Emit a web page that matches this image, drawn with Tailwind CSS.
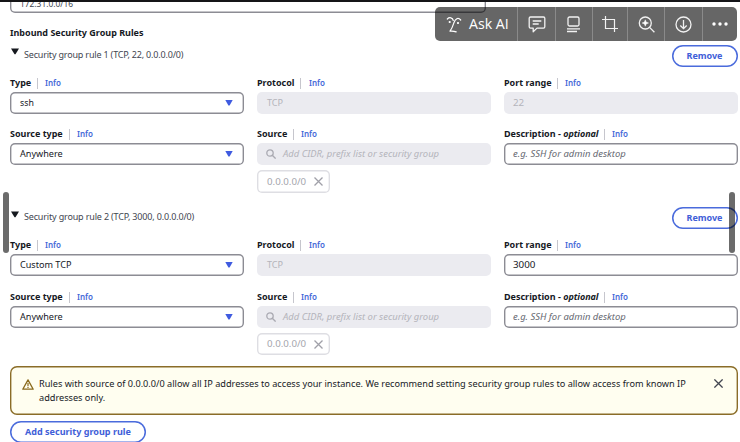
<!DOCTYPE html>
<html lang="en">
<head>
<meta charset="utf-8">
<title>Inbound Security Group Rules</title>
<script src="https://cdn.jsdelivr.net/npm/@tailwindcss/browser@4"></script>
</head>
<body class="relative h-[442px] w-[740px] overflow-hidden bg-white font-['Noto_Sans',sans-serif] text-[9.1px] leading-[14px] whitespace-nowrap text-[#16191f]">

<!-- Network field above the rules, cut by the top edge -->
<header class="h-[13px] overflow-hidden border-t-2 border-[#151518]">
  <div class="-mt-3 ml-[10px] flex h-[23px] w-[476px] items-center rounded-[5px] shadow-[inset_0_0_0_1.4px_#8c8c94] pl-[10px] text-[8.4px] text-[#424650]"><span class="mt-[5px]">172.31.0.0/16</span></div>
</header>

<main class="pl-[10px]">
  <h2 class="mt-[13px] h-[14px] text-[9px] font-bold">Inbound Security Group Rules</h2>

  <!-- Rule 1 -->
  <section class="mt-[5px] h-[162px] w-[727.5px]">
    <div class="flex h-[22px] justify-between">
      <div class="flex">
        <svg class="mt-[3px] ml-px h-[7px] w-2" viewBox="0 0 8 7"><path d="M0 .5h8L4.500 6.200h-1z" fill="#16191f"/></svg>
        <span class="mt-[3px] ml-[5px] text-[9px] tracking-[-0.18px] text-[#424650]">Security group rule 1 (TCP, 22, 0.0.0.0/0)</span>
      </div>
      <button class="h-[22px] w-[66px] rounded-full text-[9px] leading-[22px] font-bold text-[#3f60d8] shadow-[inset_0_0_0_1.5px_#4a6bdc]">Remove</button>
    </div>
    <div class="mt-[7px] grid grid-cols-[233.5px_233.5px_233.5px] gap-x-[13.500px]">
      <div>
        <div class="flex h-[18px] items-center text-[9px] font-bold"><span class="w-[27px]">Type</span><i class="h-[11px] w-px bg-[#c6c6cd]"></i><span class="ml-[7px] text-[8px] font-semibold text-[#4468d8]">Info</span></div>
        <div class="flex h-[22px] items-center justify-between rounded-[5px] pr-[11px] pl-[10px] shadow-[inset_0_0_0_1.4px_#8c8c94]"><span class="text-[8.8px]">ssh</span><svg class="h-[6px] w-[8px]" viewBox="0 0 8 6"><path d="M.3 0h7.400L4.600 5.600H3.400z" fill="#3f5be0"/></svg></div>
      </div>
      <div>
        <div class="flex h-[18px] items-center text-[9px] font-bold"><span class="w-[43px]">Protocol</span><i class="h-[11px] w-px bg-[#c6c6cd]"></i><span class="ml-[8px] text-[8px] font-semibold text-[#4468d8]">Info</span></div>
        <div class="flex h-[22px] items-center rounded-[5px] bg-[#ebebf0] pl-[10px] text-[#b4b4bb]">TCP</div>
      </div>
      <div>
        <div class="flex h-[18px] items-center text-[9px] font-bold"><span class="w-[53px]">Port range</span><i class="h-[11px] w-px bg-[#c6c6cd]"></i><span class="ml-[7px] text-[8px] font-semibold text-[#4468d8]">Info</span></div>
        <div class="flex h-[22px] items-center rounded-[5px] bg-[#ebebf0] pl-[9px] text-[9.8px] text-[#b4b4bb]">22</div>
      </div>
    </div>
    <div class="mt-[11px] grid grid-cols-[233.5px_233.5px_233.5px] gap-x-[13.500px]">
      <div>
        <div class="flex h-[18px] items-center text-[9px] font-bold"><span class="w-[59px]">Source type</span><i class="h-[11px] w-px bg-[#c6c6cd]"></i><span class="ml-[7px] text-[8px] font-semibold text-[#4468d8]">Info</span></div>
        <div class="flex h-[22px] items-center justify-between rounded-[5px] pr-[11px] pl-[10px] shadow-[inset_0_0_0_1.4px_#8c8c94]"><span>Anywhere</span><svg class="h-[6px] w-[8px]" viewBox="0 0 8 6"><path d="M.3 0h7.400L4.600 5.600H3.400z" fill="#3f5be0"/></svg></div>
      </div>
      <div>
        <div class="flex h-[18px] items-center text-[9px] font-bold"><span class="w-[36px]">Source</span><i class="h-[11px] w-px bg-[#c6c6cd]"></i><span class="ml-[7px] text-[8px] font-semibold text-[#4468d8]">Info</span></div>
        <div class="flex h-[22px] items-center rounded-[5px] bg-[#ebebf0] pl-[9px] text-[9.45px] text-[#b4b4bb] italic"><svg class="mr-[7px] size-[10px]" viewBox="0 0 10 10" fill="none" stroke="#aaaab2" stroke-width="1.300"><circle cx="4" cy="4" r="3.200"/><path d="M6.300 6.300 9.600 9.600"/></svg>Add CIDR, prefix list or security group</div>
        <div class="mt-[5px] flex h-[23px] w-[73px] items-center justify-between rounded-[5px] pr-[7px] pl-[10px] text-[9.7px] text-[#a5a5ad] shadow-[inset_0_0_0_1.4px_#dedee3]">0.0.0.0/0<svg class="size-[9px]" viewBox="0 0 9 9" stroke="#a0a0a8" stroke-width="1.300"><path d="m.5.5 8 8m0-8-8 8"/></svg></div>
      </div>
      <div>
        <div class="flex h-[18px] items-center text-[9px] font-bold"><span class="w-[100px]">Description - <em class="tracking-[-0.05px]">optional</em></span><i class="h-[11px] w-px bg-[#c6c6cd]"></i><span class="ml-[7px] text-[8px] font-semibold text-[#4468d8]">Info</span></div>
        <div class="flex h-[22px] items-center rounded-[5px] pl-[9px] text-[9.45px] text-[#656871] italic shadow-[inset_0_0_0_1.4px_#8c8c94]">e.g. SSH for admin desktop</div>
      </div>
    </div>
  </section>

  <!-- Rule 2 -->
  <section class="h-[148px] w-[727.5px]">
    <div class="flex h-[22px] justify-between">
      <div class="flex">
        <svg class="mt-[4px] ml-px h-[7px] w-2" viewBox="0 0 8 7"><path d="M0 .5h8L4.500 6.200h-1z" fill="#16191f"/></svg>
        <span class="mt-[3px] ml-[5px] text-[9px] tracking-[-0.16px] text-[#424650]">Security group rule 2 (TCP, 3000, 0.0.0.0/0)</span>
      </div>
      <button class="h-[22px] w-[66px] rounded-full text-[9px] leading-[22px] font-bold text-[#3f60d8] shadow-[inset_0_0_0_1.5px_#4a6bdc]">Remove</button>
    </div>
    <div class="mt-[7px] grid grid-cols-[233.5px_233.5px_233.5px] gap-x-[13.500px]">
      <div>
        <div class="flex h-[18px] items-center text-[9px] font-bold"><span class="w-[27px]">Type</span><i class="h-[11px] w-px bg-[#c6c6cd]"></i><span class="ml-[7px] text-[8px] font-semibold text-[#4468d8]">Info</span></div>
        <div class="flex h-[22px] items-center justify-between rounded-[5px] pr-[11px] pl-[10px] shadow-[inset_0_0_0_1.4px_#8c8c94]"><span>Custom TCP</span><svg class="h-[6px] w-[8px]" viewBox="0 0 8 6"><path d="M.3 0h7.400L4.600 5.600H3.400z" fill="#3f5be0"/></svg></div>
      </div>
      <div>
        <div class="flex h-[18px] items-center text-[9px] font-bold"><span class="w-[43px]">Protocol</span><i class="h-[11px] w-px bg-[#c6c6cd]"></i><span class="ml-[8px] text-[8px] font-semibold text-[#4468d8]">Info</span></div>
        <div class="flex h-[22px] items-center rounded-[5px] bg-[#ebebf0] pl-[10px] text-[#b4b4bb]">TCP</div>
      </div>
      <div>
        <div class="flex h-[18px] items-center text-[9px] font-bold"><span class="w-[53px]">Port range</span><i class="h-[11px] w-px bg-[#c6c6cd]"></i><span class="ml-[7px] text-[8px] font-semibold text-[#4468d8]">Info</span></div>
        <div class="flex h-[22px] items-center rounded-[5px] pl-[9px] text-[9.8px] shadow-[inset_0_0_0_1.4px_#8c8c94]">3000</div>
      </div>
    </div>
    <div class="mt-[12px] grid grid-cols-[233.5px_233.5px_233.5px] gap-x-[13.500px]">
      <div>
        <div class="flex h-[18px] items-center text-[9px] font-bold"><span class="w-[59px]">Source type</span><i class="h-[11px] w-px bg-[#c6c6cd]"></i><span class="ml-[7px] text-[8px] font-semibold text-[#4468d8]">Info</span></div>
        <div class="flex h-[22px] items-center justify-between rounded-[5px] pr-[11px] pl-[10px] shadow-[inset_0_0_0_1.4px_#8c8c94]"><span>Anywhere</span><svg class="h-[6px] w-[8px]" viewBox="0 0 8 6"><path d="M.3 0h7.400L4.600 5.600H3.400z" fill="#3f5be0"/></svg></div>
      </div>
      <div>
        <div class="flex h-[18px] items-center text-[9px] font-bold"><span class="w-[36px]">Source</span><i class="h-[11px] w-px bg-[#c6c6cd]"></i><span class="ml-[7px] text-[8px] font-semibold text-[#4468d8]">Info</span></div>
        <div class="flex h-[22px] items-center rounded-[5px] bg-[#ebebf0] pl-[9px] text-[9.45px] text-[#b4b4bb] italic"><svg class="mr-[7px] size-[10px]" viewBox="0 0 10 10" fill="none" stroke="#aaaab2" stroke-width="1.300"><circle cx="4" cy="4" r="3.200"/><path d="M6.300 6.300 9.600 9.600"/></svg>Add CIDR, prefix list or security group</div>
        <div class="mt-[5px] flex h-[22px] w-[73px] items-center justify-between rounded-[5px] pr-[7px] pl-[10px] text-[9.7px] text-[#a5a5ad] shadow-[inset_0_0_0_1.4px_#dedee3]">0.0.0.0/0<svg class="size-[9px]" viewBox="0 0 9 9" stroke="#a0a0a8" stroke-width="1.300"><path d="m.5.5 8 8m0-8-8 8"/></svg></div>
      </div>
      <div>
        <div class="flex h-[18px] items-center text-[9px] font-bold"><span class="w-[100px]">Description - <em class="tracking-[-0.05px]">optional</em></span><i class="h-[11px] w-px bg-[#c6c6cd]"></i><span class="ml-[7px] text-[8px] font-semibold text-[#4468d8]">Info</span></div>
        <div class="flex h-[22px] items-center rounded-[5px] pl-[9px] text-[9.45px] text-[#656871] italic shadow-[inset_0_0_0_1.4px_#8c8c94]">e.g. SSH for admin desktop</div>
      </div>
    </div>
  </section>

  <!-- Warning -->
  <div class="mt-[11px] flex h-[49px] w-[727.5px] rounded-[7px] bg-[#fffef0] pt-[11px] pl-[12px] text-[9.16px] leading-[14px] text-[#16191f] shadow-[inset_0_0_0_1.4px_#8a6c28]">
    <svg class="mt-[2px] h-[11px] w-[12px]" viewBox="0 0 12 11" fill="none" stroke="#8a6a1c" stroke-width="1.300" stroke-linejoin="round"><path d="M6 .9 11.200 10.200H.8z"/><path d="M6 4v3M6 7.800v1.200" stroke-width="1.200"/></svg>
    <p class="ml-[5px] w-[662px]">Rules with source of 0.0.0.0/0 allow all IP addresses to access your instance. We recommend setting security group rules to allow access from known IP<br>addresses only.</p>
    <svg class="mt-[2px] ml-[13px] size-[9px]" viewBox="0 0 9 9" stroke="#424650" stroke-width="1.300"><path d="m.4.4 8.200 8.200m0-8.200L.4 8.600"/></svg>
  </div>
  <button class="mt-[6px] block h-[22px] w-[136px] rounded-full text-[9.05px] leading-[22px] font-bold text-[#3f60d8] shadow-[inset_0_0_0_1.5px_#4a6bdc]">Add security group rule</button>
</main>

<!-- Floating capture toolbar -->
<div class="absolute top-[7px] left-[435px] flex h-[34px] w-[302px] items-center rounded-[5px] bg-black/60 text-white">
  <div class="flex h-full w-[82px] items-center pl-[11px]">
    <svg class="h-[17px] w-[16px]" viewBox="0 0 16 17" fill="none" stroke="#fff" stroke-width="1.200" stroke-linecap="round" stroke-linejoin="round"><path d="M1.300 3C3.500.8 6.600 1.500 7.300 4.500"/><path d="M14.700 4C12 1 9.300 2.800 8 6.500 6.900 9.800 6.300 12 4 15.200c2.300-.3 4.300 0 6.200.7"/><circle cx="3.700" cy="6" r=".5" fill="#fff"/><circle cx="12" cy="7" r=".5" fill="#fff"/></svg>
    <span class="ml-[7px] font-['Open_Sans','Noto_Sans',sans-serif] text-[14.2px] leading-5">Ask AI</span>
  </div>
  <div class="flex h-full w-[38px] items-center justify-center border-l border-[#8a8a8a]"><svg class="h-[17px] w-[18px]" viewBox="0 0 18 17" fill="none" stroke="#f2f2f2" stroke-width="1.300" stroke-linejoin="round"><path d="M2.500 1h13a1.300 1.300 0 0 1 1.300 1.300v8.500a1.300 1.300 0 0 1-1.300 1.300H9l-3.800 3.600v-3.600H2.500a1.300 1.300 0 0 1-1.300-1.300V2.300A1.300 1.300 0 0 1 2.500 1z"/><path d="M4.700 5h8.600M4.700 8h6"/></svg></div>
  <div class="flex h-full w-[37px] items-center justify-center border-l border-[#8a8a8a] pr-[2px]"><svg class="h-[17px] w-[15px]" viewBox="0 0 15 17" fill="none" stroke="#f2f2f2" stroke-width="1.300"><rect x="2" y="1" width="11" height="9" rx="1.500"/><path d="M1 12.800h13M1 15.500h10"/></svg></div>
  <div class="flex h-full w-[35px] items-center justify-center border-l border-[#8a8a8a]"><svg class="size-[16px]" viewBox="0 0 16 16" fill="none" stroke="#f2f2f2" stroke-width="1.200"><path d="M3.500 0v12.500H16M0 3.500h12.500V16"/></svg></div>
  <div class="flex h-full w-[37px] items-center justify-center border-l border-[#8a8a8a]"><svg class="size-[17px]" viewBox="0 0 17 17" fill="none" stroke="#f2f2f2" stroke-width="1.300"><circle cx="7.300" cy="7" r="6"/><path d="m11.600 11.400 4.800 4.800"/><path d="m7.300 3.800.9 2.300 2.300.9-2.300.9-.9 2.300-.9-2.300L4.100 7l2.300-.9z" fill="#fff" stroke-width=".5"/></svg></div>
  <div class="flex h-full w-[38px] items-center justify-center border-l border-[#8a8a8a]"><svg class="size-[17px]" viewBox="0 0 17 17" fill="none" stroke="#f2f2f2" stroke-width="1.300"><circle cx="8.500" cy="8.500" r="7.500"/><path d="M8.500 4v8.500M5.300 9.500l3.200 3.200 3.200-3.200"/></svg></div>
  <div class="flex h-full w-[35px] items-center justify-center border-l border-[#8a8a8a]"><svg class="h-1 w-[16px]" viewBox="0 0 16 4" fill="#fff"><circle cx="2" cy="2" r="1.700"/><circle cx="8" cy="2" r="1.700"/><circle cx="14" cy="2" r="1.700"/></svg></div>
</div>

<!-- Overlay scroll handles -->
<div class="absolute top-[192px] left-[3px] h-[61px] w-[6px] rounded-[3px] bg-black/58"></div>
<div class="absolute top-[192px] left-[729px] h-[61px] w-[6px] rounded-[3px] bg-black/58"></div>
</body>
</html>
